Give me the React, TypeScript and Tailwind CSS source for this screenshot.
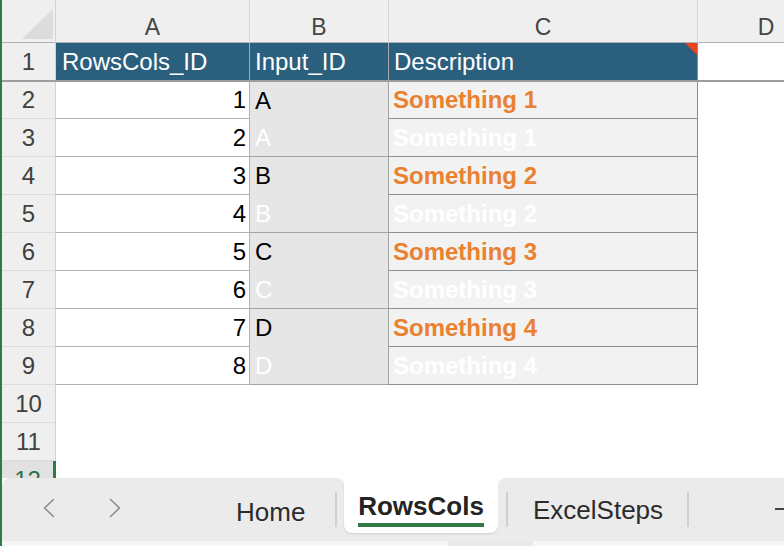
import React from "react";

// ── Sheet data ────────────────────────────────────────────────────────────────
const rows = [
  { n: 2, id: 1, inp: "A", desc: "Something 1", ghost: false },
  { n: 3, id: 2, inp: "A", desc: "Something 1", ghost: true },
  { n: 4, id: 3, inp: "B", desc: "Something 2", ghost: false },
  { n: 5, id: 4, inp: "B", desc: "Something 2", ghost: true },
  { n: 6, id: 5, inp: "C", desc: "Something 3", ghost: false },
  { n: 7, id: 6, inp: "C", desc: "Something 3", ghost: true },
  { n: 8, id: 7, inp: "D", desc: "Something 4", ghost: false },
  { n: 9, id: 8, inp: "D", desc: "Something 4", ghost: true },
];

function Chevron({ dir }: { dir: "left" | "right" }) {
  return (
    <svg width="12" height="20" viewBox="0 0 12 20" fill="none">
      <polyline
        points={dir === "left" ? "10.5,1.5 1.5,10 10.5,18.5" : "1.5,1.5 10.5,10 1.5,18.5"}
        stroke="#8a8a8a"
        strokeWidth="1.6"
        strokeLinecap="round"
        strokeLinejoin="round"
      />
    </svg>
  );
}

export default function App() {
  return (
    <div className="flex w-[784px] h-[546px] overflow-hidden bg-white font-['Liberation_Sans',Arial,sans-serif]">
      {/* window edge */}
      <div className="w-[2px] shrink-0 bg-[#2f7a47]" />

      <div className="flex flex-col flex-1 min-w-0">
        {/* ── Grid ─────────────────────────────────────────────────── */}
        <div className="h-[478px] overflow-hidden">
          {/* column letters */}
          <div className="grid grid-cols-[54px_194px_139px_309px_1fr] h-[43px] bg-[#efefef] border-b border-[#b1b1b1] text-[23px] text-[#444]">
            <div className="relative border-r border-[#d2d2d2]">
              <svg className="absolute left-[20px] top-[9px]" width="31" height="30" viewBox="0 0 31 30">
                <polygon points="0,30 31,30 31,0" fill="#dcdcdc" />
              </svg>
            </div>
            {["A", "B", "C"].map((c) => (
              <div key={c} className="flex items-center justify-center pt-[10px] border-r border-[#d6d6d6]">
                {c}
              </div>
            ))}
            <div className="overflow-hidden">
              <div className="w-[136px] flex items-center justify-center pt-[10px] h-full">D</div>
            </div>
          </div>

          {/* row 1: headings */}
          <div className="grid grid-cols-[54px_194px_139px_309px_1fr] h-[39px] border-b-2 border-[#9d9d9d] text-[24px]">
            <div className="flex items-center justify-center bg-[#efefef] border-r border-[#d2d2d2] text-[#404040]">1</div>
            <div className="flex items-center pl-[6px] bg-[#2a5f7e] text-white border-r border-[#a9a9a9]">RowsCols_ID</div>
            <div className="flex items-center pl-[5px] bg-[#2a5f7e] text-white border-r border-[#a9a9a9]">Input_ID</div>
            <div className="relative flex items-center pl-[5px] bg-[#2a5f7e] text-white border-r border-[#8c8c8c]">
              Description
              <svg className="absolute right-0 top-0" width="12" height="12" viewBox="0 0 12 12">
                <polygon points="0,0 12,0 12,12" fill="#e9431f" />
              </svg>
            </div>
            <div className="bg-white" />
          </div>

          {/* rows 2–9 */}
          {rows.map((r) => (
            <div
              key={r.n}
              className={`grid grid-cols-[54px_194px_139px_309px_1fr] text-[24px] ${r.n === 2 ? "h-[37px]" : "h-[38px]"}`}
            >
              <div className="flex items-center justify-center bg-[#efefef] border-r border-b border-r-[#d2d2d2] border-b-[#dcdcdc] text-[#404040]">
                {r.n}
              </div>
              <div className="flex items-center justify-end pr-[3px] bg-white border-r border-b border-[#b2b2b2] text-black">
                {r.id}
              </div>
              <div
                className={`flex items-center pl-[5px] bg-[#e6e6e6] border-r border-[#a3a3a3] ${
                  r.ghost ? "border-b text-white" : "text-black"
                }`}
              >
                {r.inp}
              </div>
              <div
                className={`flex items-center pl-[4px] bg-[#f2f2f2] border-r border-b border-[#8e8e8e] font-bold ${
                  r.ghost ? "text-white" : "text-[#e98130]"
                }`}
              >
                {r.desc}
              </div>
              <div className="bg-white" />
            </div>
          ))}

          {/* empty rows */}
          {[10, 11].map((n) => (
            <div key={n} className="grid grid-cols-[54px_1fr] h-[38px] text-[24px]">
              <div className="flex items-center justify-center bg-[#efefef] border-r border-b border-r-[#d2d2d2] border-b-[#dcdcdc] text-[#404040]">
                {n}
              </div>
              <div />
            </div>
          ))}
          <div className="grid grid-cols-[54px_1fr] h-[38px] text-[24px]">
            <div className="flex items-center justify-center bg-[#e1e1e1] border-r-[3px] border-[#2f7a47] text-[#2f6f47]">
              12
            </div>
            <div />
          </div>
        </div>

        {/* ── Sheet tabs ───────────────────────────────────────────── */}
        <div className="flex h-[63px] text-[26px] leading-[30px] text-[#2b2b2b]">
          <div className="flex items-start w-[342px] bg-[#ebebeb] rounded-tl-[8px] rounded-tr-[8px]">
            <div className="ml-[41px] mt-[20px]">
              <Chevron dir="left" />
            </div>
            <div className="ml-[54px] mt-[20px]">
              <Chevron dir="right" />
            </div>
            <div className="ml-[115px] mt-[19px] w-[99px]">Home</div>
            <div className="mt-[14px] w-[2px] h-[35px] bg-[#d0d0d0]" />
          </div>

          <div className="w-[154px] bg-[#ebebeb]">
            <div className="h-[55px] bg-white rounded-b-[8px] shadow-[0_1px_2px_rgba(0,0,0,0.12)] flex justify-center">
              <div className="mt-[13px] flex flex-col">
                <span className="font-bold text-[#242424]">RowsCols</span>
                <span className="mt-[2px] h-[4px] w-full bg-[#2f7a47]" />
              </div>
            </div>
          </div>

          <div className="flex items-start flex-1 bg-[#ebebeb] rounded-tl-[8px] overflow-hidden">
            <div className="ml-[8px] mt-[14px] w-[2px] h-[35px] bg-[#d0d0d0] shrink-0" />
            <div className="mt-[17px] w-[179px] pl-[25px] shrink-0">ExcelSteps</div>
            <div className="mt-[14px] w-[2px] h-[35px] bg-[#d0d0d0] shrink-0" />
            <svg className="ml-[86px] mt-[21px] shrink-0" width="20" height="20" viewBox="0 0 20 20">
              <line x1="0" y1="10" x2="20" y2="10" stroke="#444" strokeWidth="2" />
              <line x1="10" y1="0" x2="10" y2="20" stroke="#444" strokeWidth="2" />
            </svg>
          </div>
        </div>

        {/* scroll strip */}
        <div className="flex h-[5px] bg-[#f6f6f6]">
          <div className="ml-[446px] w-[85px] bg-[#e9e9e9]" />
        </div>
      </div>
    </div>
  );
}
